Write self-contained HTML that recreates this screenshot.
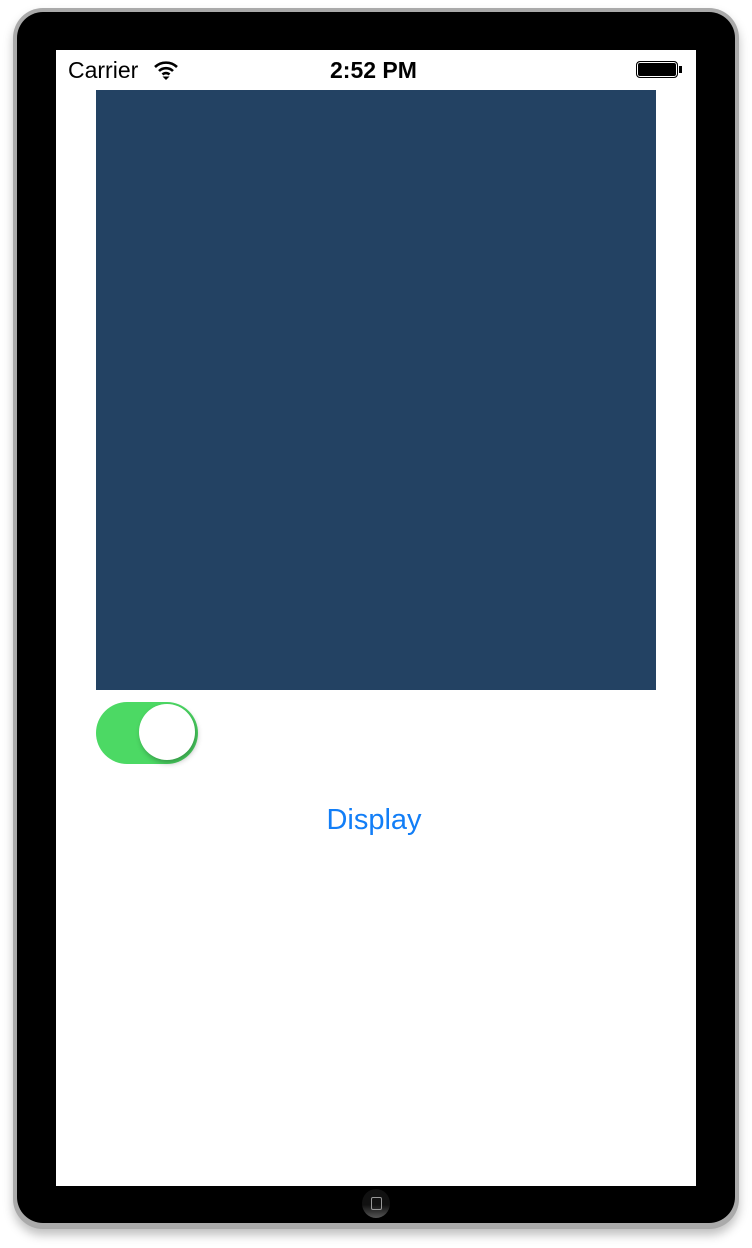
<!DOCTYPE html>
<html><head><style>
body{margin:0;width:752px;height:1248px;background:#fff;position:relative;overflow:hidden;font-family:"Liberation Sans",sans-serif}
.outer{position:absolute;left:13px;top:8px;width:726px;height:1221px;border-radius:30px;background:#aaa;box-shadow:0 6px 10px rgba(0,0,0,.25)}
.black{position:absolute;left:17px;top:12px;width:718px;height:1211px;border-radius:26px;background:#000}
.screen{position:absolute;left:56px;top:50px;width:640px;height:1136px;background:#fff}
.blue{position:absolute;left:96px;top:90px;width:560px;height:600px;background:#234263}
.sw{position:absolute;left:96px;top:702px;width:102px;height:62px;border-radius:31px;background:#4cd964}
.knob{position:absolute;left:139px;top:704px;width:56px;height:56px;border-radius:50%;background:#fff;box-shadow:2px 3px 6px rgba(0,0,0,.3)}
.disp{position:absolute;left:0;width:748px;top:804px;text-align:center;font-size:29px;color:#127ef7}
.st{position:absolute;top:57px;font-size:23px;color:#000}
.home{position:absolute;left:362px;top:1189px;width:28px;height:29px;border-radius:50%;background:linear-gradient(#111 55%,#555)}
.home i{position:absolute;left:9px;top:8px;width:9px;height:11px;border:1px solid #999;border-radius:2px}
</style></head><body>
<div class="outer"></div><div class="black"></div><div class="screen"></div>
<div class="st" style="left:68px">Carrier</div>
<svg style="position:absolute;left:153px;top:60px" width="26" height="20" viewBox="0 0 26 20"><path d="M2 7a16 16 0 0 1 22 0M6 11a10 10 0 0 1 14 0M9.5 14.5a5 5 0 0 1 7 0" stroke="#000" stroke-width="2.6" fill="none"/><path d="M13 20l-3.5-3.5h7z" fill="#000"/></svg>
<div class="st" style="left:330px;font-weight:bold">2:52 PM</div>
<div style="position:absolute;left:636px;top:61px;width:42px;height:17px;border:1.5px solid #000;border-radius:4px;box-sizing:border-box;background:#000;box-shadow:inset 0 0 0 1px #fff"></div>
<div style="position:absolute;left:679px;top:66px;width:3px;height:7px;background:#000"></div>
<div class="blue"></div>
<div class="sw"></div><div class="knob"></div>
<div class="disp">Display</div>
<div class="home"><i></i></div>
</body></html>
